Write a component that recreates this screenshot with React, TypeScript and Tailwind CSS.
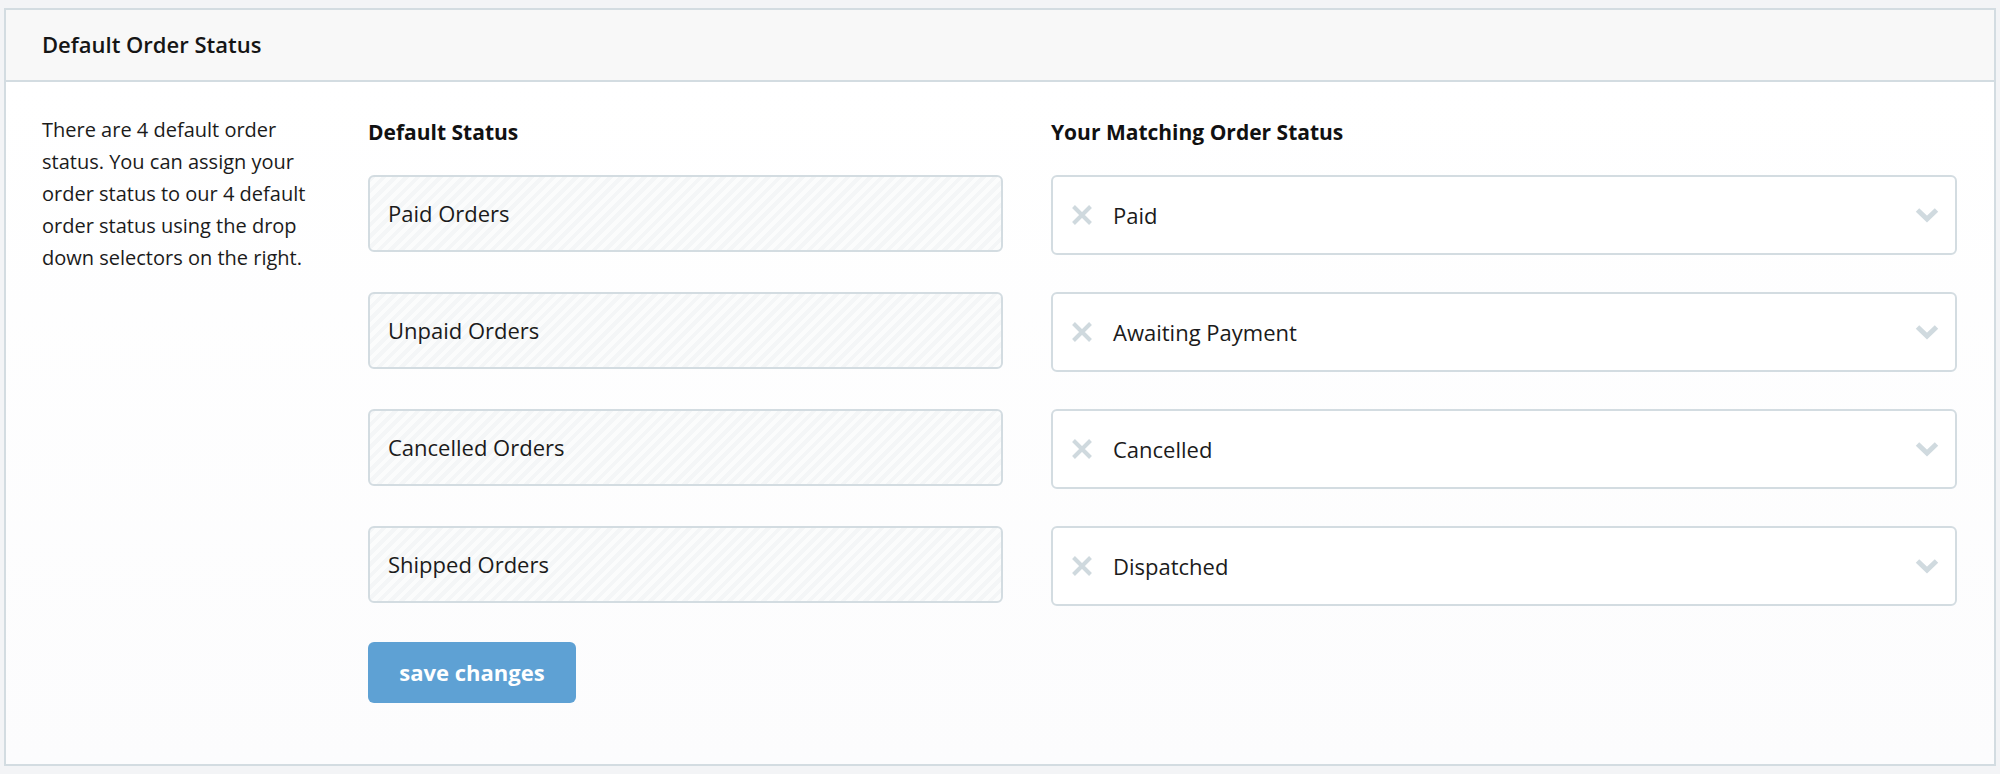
import { ReactNode } from 'react';

const ROWS: { label: string; match: string }[] = [
  { label: 'Paid Orders', match: 'Paid' },
  { label: 'Unpaid Orders', match: 'Awaiting Payment' },
  { label: 'Cancelled Orders', match: 'Cancelled' },
  { label: 'Shipped Orders', match: 'Dispatched' },
];

function ClearIcon() {
  return (
    <svg width="20" height="20" viewBox="0 0 20 20" className="shrink-0">
      <path d="M1.5 1.5 L18.5 18.5 M18.5 1.5 L1.5 18.5" stroke="#cfd9de" strokeWidth="4" strokeLinecap="butt" />
    </svg>
  );
}

function Chevron() {
  return (
    <svg width="24" height="16" viewBox="0 0 24 16" className="shrink-0">
      <path d="M2.5 3 L12 12 L21.5 3" stroke="#d0dadf" strokeWidth="5" fill="none" />
    </svg>
  );
}

function Heading({ children }: { children: ReactNode }) {
  return <h3 className="text-[21px] leading-[28px] font-bold text-[#111]">{children}</h3>;
}

export default function App() {
  return (
    <div
      className="min-h-screen bg-[#f3f4f6] pt-2 pb-2 px-1 text-[#1b1b1b]"
      style={{ fontFamily: '"Open Sans", Lato, sans-serif' }}
    >
      <div className="border-2 border-[#d3dce1] bg-white">
        <div className="h-[72px] flex items-center pl-[36px] bg-[#f8f8f8] border-b-2 border-[#d3dce1]">
          <h2 className="text-[22px] leading-[30px] -mt-[2px] font-semibold text-[#151515]">Default Order Status</h2>
        </div>

        <div className="flex pt-[32px] pl-[36px] pr-[37px] pb-[61px] bg-gradient-to-b from-white to-[#fcfcfd]">
          <div className="w-[326px] shrink-0">
            <p className="w-[285px] text-[20px] leading-[32px]">
              There are 4 default order status. You can assign your order status to our 4 default order
              status using the drop down selectors on the right.
            </p>
          </div>

          <div className="flex-1 grid grid-cols-[635px_1fr] gap-x-12 items-start">
            <div className="pt-1 pb-[29px]">
              <Heading>Default Status</Heading>
            </div>
            <div className="pt-1 pb-[29px]">
              <Heading>Your Matching Order Status</Heading>
            </div>

            {ROWS.map((r, i) => (
              <div key={r.label} className="contents">
                <div
                  className={`h-[77px] flex items-center pl-[18px] rounded-[6px] border-2 border-[#d3dce1] bg-[repeating-linear-gradient(135deg,#f4f6f7_0px,#f4f6f7_4px,#fbfcfc_4px,#fbfcfc_8px)] text-[22px] ${i < 3 ? 'mb-[40px]' : ''}`}
                >
                  {r.label}
                </div>
                <div
                  className={`h-[80px] flex items-center pl-[19px] pr-[16px] rounded-[6px] border-2 border-[#d3dce1] bg-white text-[22px] ${i < 3 ? 'mb-[37px]' : ''}`}
                >
                  <ClearIcon />
                  <span className="ml-[21px] flex-1">{r.match}</span>
                  <Chevron />
                </div>
              </div>
            ))}

            <div className="pt-[36px]">
              <button className="w-[208px] h-[61px] rounded-[6px] bg-[#5ea1d4] text-white text-[22px] font-bold">
                save changes
              </button>
            </div>
          </div>
        </div>
      </div>
    </div>
  );
}
